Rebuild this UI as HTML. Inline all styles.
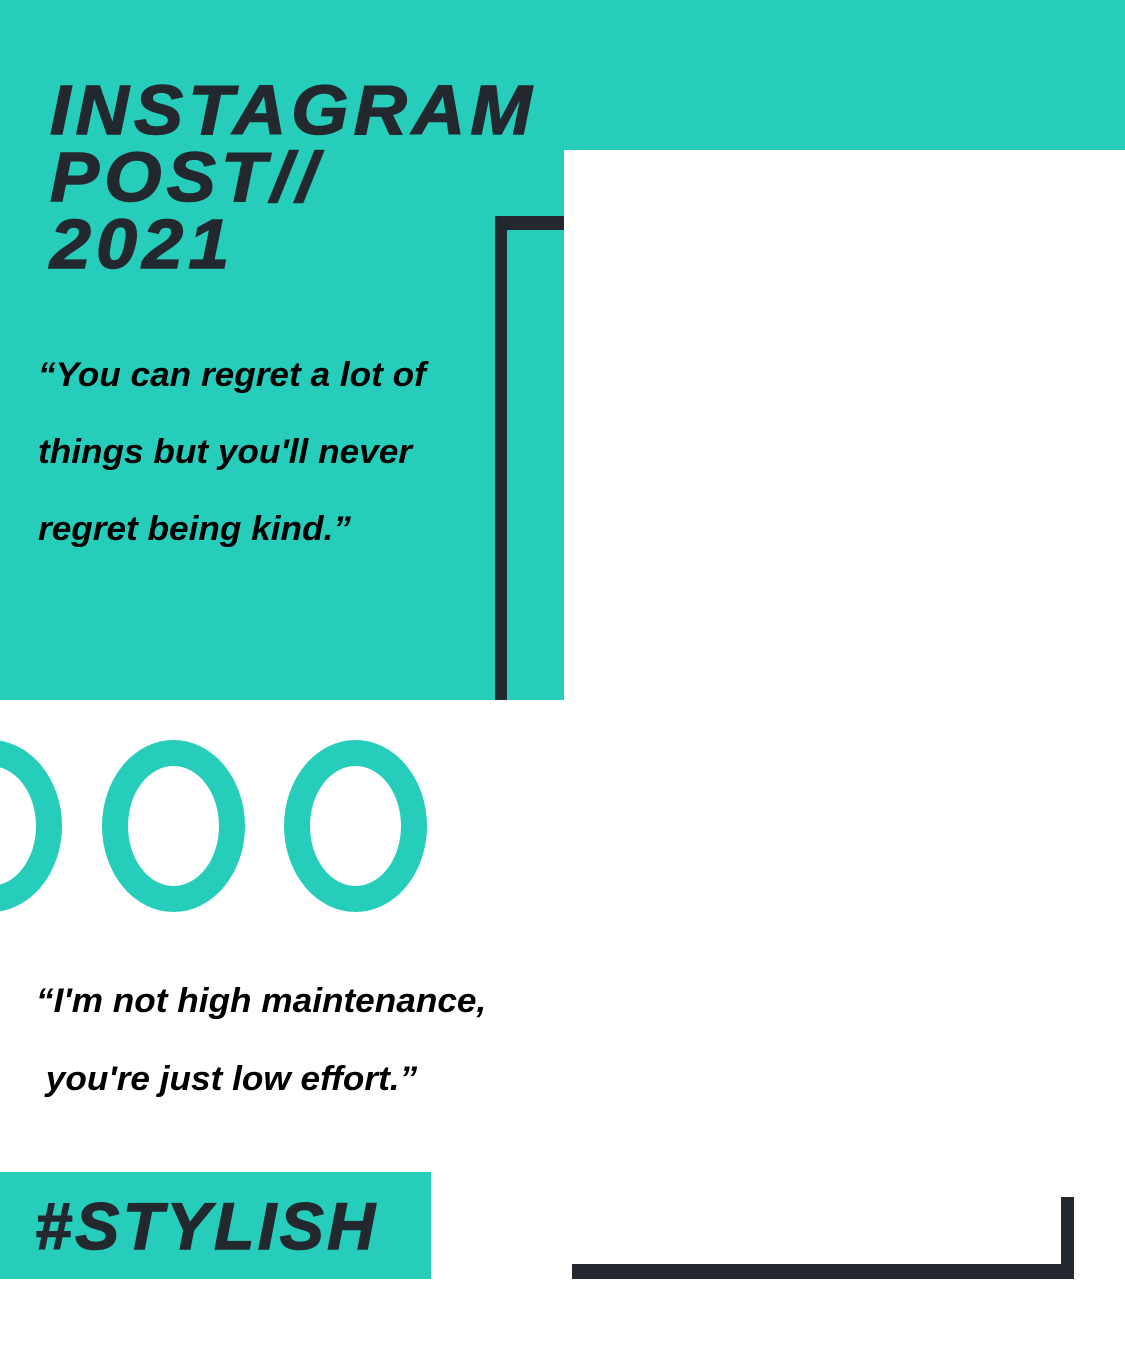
<!DOCTYPE html>
<html><head><style>
*{margin:0;padding:0}
body{width:1125px;height:1350px;position:relative;background:#fff;overflow:hidden;font-family:"Liberation Sans",sans-serif}
.a{position:absolute}
.t{color:#23282f;font-weight:bold;font-style:italic;white-space:nowrap}
.ring{position:absolute;width:91px;height:120px;border:26px solid #26cdbb;border-radius:50%}
</style></head><body>
<div class="a" style="left:0;top:0;width:1125px;height:150px;background:#26cdbb"></div>
<div class="a" style="left:0;top:0;width:564px;height:700px;background:#26cdbb"></div>
<div class="a" style="left:495px;top:216px;width:12px;height:484px;background:#23282f"></div>
<div class="a" style="left:495px;top:216px;width:69px;height:14px;background:#23282f"></div>
<div class="a t" style="left:50px;top:77px;font-size:70px;line-height:67px;letter-spacing:5px;transform:scaleX(1.05);transform-origin:left;-webkit-text-stroke:1.5px #23282f">INSTAGRAM<br>POST//<br>2021</div>
<div class="a t" style="left:38px;top:337px;font-size:34px;line-height:77px;color:#000;transform:scaleX(1.035);transform-origin:left">“You can regret a lot of<br>things but you'll never<br>regret being kind.”</div>
<div class="ring" style="left:-81px;top:740px"></div>
<div class="ring" style="left:102px;top:740px"></div>
<div class="ring" style="left:284px;top:740px"></div>
<div class="a t" style="left:36px;top:962px;font-size:34px;line-height:78px;color:#000;transform:scaleX(1.035);transform-origin:left">“I'm not high maintenance,<br>&nbsp;you're just low effort.”</div>
<div class="a" style="left:0;top:1172px;width:431px;height:107px;background:#26cdbb"></div>
<div class="a t" style="left:35px;top:1188px;font-size:66px;line-height:76px;letter-spacing:3.5px;-webkit-text-stroke:1.5px #23282f">#STYLISH</div>
<div class="a" style="left:572px;top:1264px;width:502px;height:15px;background:#23282f"></div>
<div class="a" style="left:1061px;top:1197px;width:13px;height:82px;background:#23282f"></div>
</body></html>
